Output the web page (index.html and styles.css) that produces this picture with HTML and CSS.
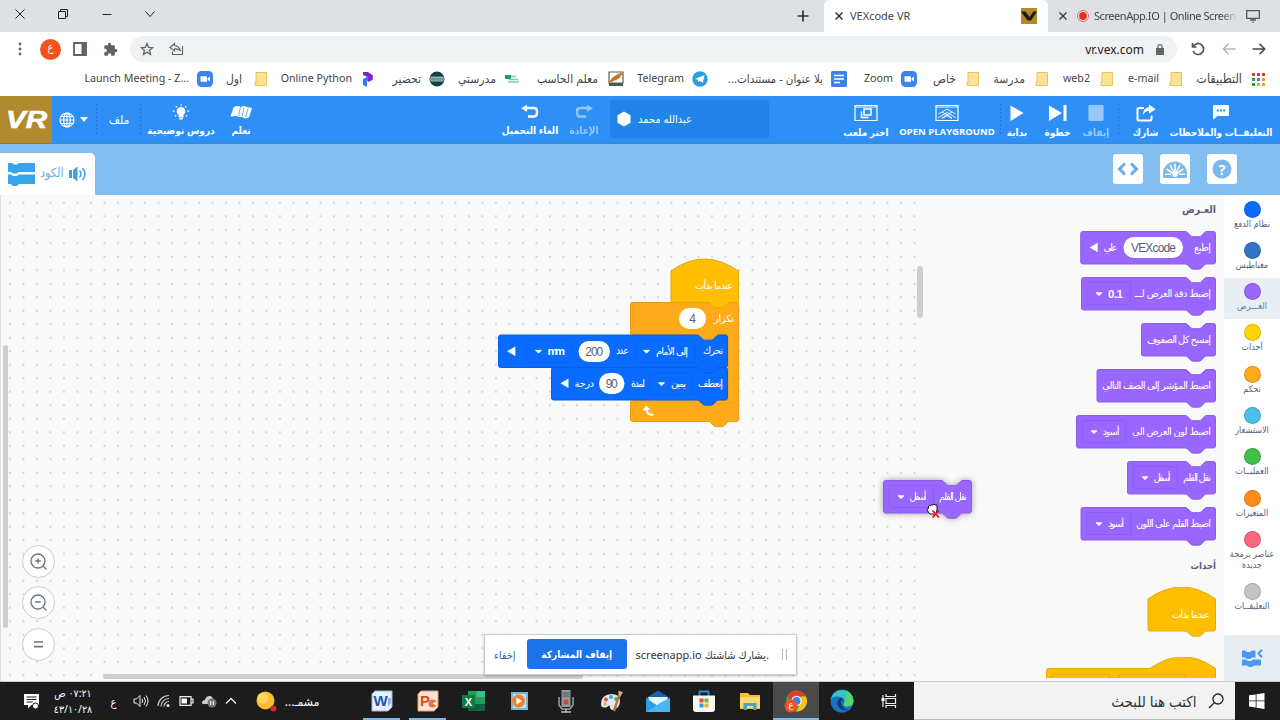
FILE: index.html
```html
<!DOCTYPE html>
<html lang="ar">
<head>
  <meta charset="UTF-8">
  <meta name="viewport" content="width=device-width, initial-scale=1.0">
  <title>VEXcode VR</title>
  <link rel="stylesheet" href="styles.css">
</head>
<body>

  <!-- shared shapes -->
  <svg class="defs" width="0" height="0">
    <defs>
      <symbol id="folder" viewBox="0 0 16 16"><path d="M4 1.500h10.500v13H4z" fill="#fde293" stroke="#e8c55c"/><path d="M4.500 10.500l-1.500.5v3.500h8" fill="#fde293" stroke="#e8c55c"/></symbol>
      <symbol id="zoomapp" viewBox="0 0 16 16"><rect width="16" height="16" rx="4.500" fill="#3f83f0"/><path d="M3.500 5.200h5.500q1 0 1 1v4.600H4.500q-1 0-1-1zM10.600 7.200l2.400-1.700v5l-2.400-1.700z" fill="#fff"/></symbol>
      <symbol id="chev" viewBox="0 0 7 4"><path d="M.5.3h6q.5.2.1.8L4.100 3.600q-.6.5-1.200 0L.4 1.100Q0 .5.500.3z" fill="#fff"/></symbol>
    </defs>
  </svg>

  <header class="tabs">
    <div class="win">
      <svg viewBox="0 0 12 12" width="12" height="12"><path d="M1.500 1.500l9 9M10.500 1.500l-9 9"/></svg>
      <svg viewBox="0 0 12 12" width="12" height="12"><path d="M1.500 3.500h7v7h-7zM3.500 3.500v-2h7v7h-2"/></svg>
      <svg viewBox="0 0 12 12" width="12" height="12"><path d="M1.500 6.500h9"/></svg>
      <svg viewBox="0 0 12 12" width="12" height="12"><path d="M1.500 3.500L6 8.500l4.500-5"/></svg>
    </div>
    <svg class="plus" viewBox="0 0 12 12" width="12" height="12"><path d="M6 .5v11M.5 6h11" stroke="#333" stroke-width="1.700"/></svg>
    <div class="tab active">
      <svg viewBox="0 0 8 8" width="8" height="8"><path d="M.5.500l7 7M7.500.500l-7 7" stroke="#333" stroke-width="1.500"/></svg>
      <span class="tab-title">VEXcode VR</span>
      <svg viewBox="0 0 16 16" width="16" height="16"><path d="M0 0h16v16H0z" fill="#b1892f"/><path d="M0 3.500h4.500L8.500 9l4-5.500H16L10 12.500H6.500z" fill="#1e1a12"/></svg>
    </div>
    <div class="tab other">
      <svg viewBox="0 0 8 8" width="8" height="8"><path d="M.5.500l7 7M7.500.500l-7 7" stroke="#444" stroke-width="1.500"/></svg>
      <svg viewBox="0 0 12 12" width="12" height="12"><circle cx="6" cy="6" r="5.400" fill="#fff" stroke="#d93025" stroke-width=".8"/><circle cx="6" cy="6" r="3.900" fill="#d93025"/></svg>
      <span class="tab-title fade">ScreenApp.IO | Online Screen</span>
      <svg viewBox="0 0 14 16" width="14" height="16"><path d="M.7 2.700h12.600v7.600H.7zM4 12h6M7 10v2" stroke="#555" fill="none" stroke-width="1.300"/><path d="M6.200 13.500h1.600v1.500H6.200z" fill="#d55"/></svg>
    </div>
  </header>

  <div class="toolbar">
    <svg class="t-more" viewBox="0 0 4 14" width="4" height="14"><circle cx="2" cy="2" r="1.400"/><circle cx="2" cy="7" r="1.400"/><circle cx="2" cy="12" r="1.400"/></svg>
    <span class="avatar">ع</span>
    <svg viewBox="0 0 14 14" width="14" height="14"><path d="M1 1h12v12H1z" fill="none" stroke="#5f6368" stroke-width="1.800"/><path d="M8.500 1H13v12H8.500z"/></svg>
    <svg class="t-ext" viewBox="0 0 24 24" width="15" height="15"><path d="M20.500 11H19V7a2 2 0 0 0-2-2h-4V3.500a2.500 2.500 0 0 0-5 0V5H4a2 2 0 0 0-2 2v3.800h1.500a2.700 2.700 0 0 1 0 5.400H2V20a2 2 0 0 0 2 2h3.800v-1.500a2.700 2.700 0 0 1 5.400 0V22H17a2 2 0 0 0 2-2v-4h1.500a2.500 2.500 0 0 0 0-5z"/></svg>
    <div class="omnibox">
      <svg viewBox="0 0 24 24" width="14" height="14"><path d="M12 2.800l2.800 6.300 6.900.6-5.200 4.600 1.500 6.800-6-3.600-6 3.600 1.500-6.800-5.200-4.600 6.900-.6z" fill="none" stroke="#5f6368" stroke-width="2.200"/></svg>
      <svg class="o-share" viewBox="0 0 15 14" width="15" height="14"><path d="M13.500 4v8.500h-10V9.500M5.500 1.500L1 5.500l4.500 3.500V7q4-.5 6 2-1-5-6-5.500z" fill="none" stroke="#5f6368" stroke-width="1.100"/></svg>
      <span class="url">vr.vex.com</span>
      <svg viewBox="0 0 8 11" width="8" height="11"><path d="M0 4h8v7H0z"/><path d="M2 4.500V2.700a2 2 0 0 1 4 0v1.800" fill="none" stroke="#5f6368" stroke-width="1.200"/></svg>
    </div>
    <svg class="t-reload" viewBox="0 0 14 14" width="14" height="14"><path d="M2.200 4.500A5.500 5.500 0 1 1 2 9M1.500 1v4h4" fill="none" stroke="#555" stroke-width="1.700"/></svg>
    <svg class="t-back" viewBox="0 0 14 12" width="14" height="12"><path d="M13.500 6H1.500M6.500.8L1.300 6l5.200 5.200" fill="none" stroke="#b4b6b8" stroke-width="1.500"/></svg>
    <svg class="t-fwd" viewBox="0 0 14 12" width="14" height="12"><path d="M.5 6h12M7.500.8L12.700 6l-5.200 5.200" fill="none" stroke="#444" stroke-width="1.600"/></svg>
  </div>

  <nav class="bookmarks">
    <a class="bm bm-launch">Launch Meeting - Z...<svg><use href="#zoomapp"/></svg></a>
    <a class="bm ar bm-first">اول<svg><use href="#folder"/></svg></a>
    <a class="bm bm-python">Online Python<svg viewBox="0 0 16 16"><path d="M3 1h5l5 3.500-.5 4.500-4.500 2-1-3 1.500-1.500L3 4z" fill="#7a22d8"/><path d="M3 8l5-2.500V9l-1 1v6l-4-2z" fill="#2e7af5"/></svg></a>
    <a class="bm ar bm-prep">تحضير<svg viewBox="0 0 16 16"><circle cx="8" cy="8" r="7.500" fill="#12434a"/><path d="M1.500 6.200h13M1 8h14M1.500 9.900h13" stroke="#d5e5e5" stroke-width="1"/></svg></a>
    <a class="bm ar bm-school">مدرستي<svg viewBox="0 0 16 16"><path d="M1 4h6v4H1z" fill="#1a9c78"/><path d="M7 5.500h5M5 8.500h9M4 11h11" stroke="#79cbb6" stroke-width="1.300"/></svg></a>
    <a class="bm ar bm-cs">معلم الحاسب<svg viewBox="0 0 16 16"><path d="M1 1h14v11H1z" fill="#fff" stroke="#56604f" stroke-width="1.200"/><path d="M1 12Q3 5 15 1q-2 6-7 8z" fill="#c8742a"/><path d="M1 12h14v3H1z" fill="#4b5a50"/></svg></a>
    <a class="bm bm-tele">Telegram<svg viewBox="0 0 16 16"><circle cx="8" cy="8" r="7.700" fill="#2ba0dc"/><path d="M3 8l9.500-4-1.700 8-3-2.200-1.500 1.500-.3-2.500z" fill="#fff"/></svg></a>
    <a class="bm ar bm-docs" dir="rtl"><svg viewBox="0 0 16 16"><rect width="16" height="16" rx="1.500" fill="#4080ee"/><path d="M3 4.500h10M3 8h10M3 11.500h6" stroke="#fff" stroke-width="1.700"/></svg>بلا عنوان - مستندات...</a>
    <a class="bm bm-zoom">Zoom<svg><use href="#zoomapp"/></svg></a>
    <a class="bm ar bm-priv">خاص<svg><use href="#folder"/></svg></a>
    <a class="bm ar bm-mad">مدرسة<svg><use href="#folder"/></svg></a>
    <a class="bm bm-web">web2<svg><use href="#folder"/></svg></a>
    <a class="bm bm-mail">e-mail<svg><use href="#folder"/></svg></a>
    <a class="bm ar bm-apps">التطبيقات<svg viewBox="0 0 16 16"><path d="M2 2h3v3H2zM7 2h3v3H7zM12 2h3v3h-3z" fill="#d23f31"/><path d="M2 7h3v3H2z" fill="#2d9b50"/><path d="M7 7h3v3H7z" fill="#3f7fe8"/><path d="M12 7h3v3h-3zM7 12h3v3H7zM12 12h3v3h-3z" fill="#e3a92b"/><path d="M2 12h3v3H2z" fill="#2d9b50"/></svg></a>
  </nav>

  <div class="appbar">
    <div class="logo"><svg viewBox="0 0 52 47" width="52" height="47"><text x="6" y="32" textLength="41" lengthAdjust="spacingAndGlyphs" class="logo-text">VR</text></svg></div>
    <div class="ab lang">
      <svg viewBox="0 0 16 16" width="16" height="16"><g fill="none" stroke="#fff" stroke-width="1.200"><circle cx="8" cy="8" r="7"/><ellipse cx="8" cy="8" rx="3.300" ry="7"/><path d="M8 1v14M1 8h14M2 4.500h12M2 11.500h12"/></g></svg>
      <svg viewBox="0 0 8 5" width="8" height="5"><path d="M0 0h8L4 5z" fill="#fff"/></svg>
    </div>
    <div class="ab file">ملف</div>
    <div class="ab lessons">
      <svg viewBox="0 0 18 16" width="18" height="16"><path d="M9 3a4.300 4.300 0 0 0-2.500 7.800V13.500h5v-2.700A4.300 4.300 0 0 0 9 3zM7.200 14h3.600v1.500H7.200z" fill="#fff"/><path d="M9 .2v1.300M3.800 2.200l1 1M14.200 2.200l-1 1M.8 7.200h1.700M15.500 7.200h1.700M3 12.200l1.200-.9M15 12.200l-1.200-.9" stroke="#fff" stroke-width="1.300"/></svg>
      <span>دروس توضيحية</span>
    </div>
    <div class="ab learn">
      <svg viewBox="0 0 22 16" width="22" height="16"><path d="M3.500 3.500q4-2.500 7-.5l2-.8q2.500-.7 4 .8l5.500 1-3 9.500-3.500 1-4-1.500-3 0-1.500-1-6.500.5z" fill="#fff"/><path d="M10.500 3L8.500 12M14 4l-2 8.500M18 4.500l-2.500 8.500" stroke="#2e90f7" stroke-width=".7"/></svg>
      <span>تعلم</span>
    </div>
    <div class="ab undo">
      <svg viewBox="0 0 18 16" width="18" height="16"><path d="M5 4h7.500q3.500 0 3.500 3v2q0 3.500-3.500 3.500H7" fill="none" stroke="#fff" stroke-width="2.400"/><path d="M0 4.200L6 .7v7z" fill="#fff"/></svg>
      <span>الغاء التحميل</span>
    </div>
    <div class="ab redo">
      <svg viewBox="0 0 18 16" width="18" height="16"><path d="M13 4H5.500Q2 4 2 7v2q0 3.500 3.500 3.500H11" fill="none" stroke="#fff" stroke-width="2.400"/><path d="M18 4.200L12 .7v7z" fill="#fff"/></svg>
      <span>الإعادة</span>
    </div>
    <div class="project">
      <svg viewBox="0 0 14 16" width="14" height="16"><path d="M7 .5l6.500 3.700v7.600L7 15.500.5 11.800V4.200z" fill="#fff"/></svg>
      <span>عبدالله محمد</span>
    </div>
    <div class="ab pick">
      <svg viewBox="0 0 24 18" width="24" height="18"><path d="M1 1.500h22v15H1z" fill="none" stroke="#fff" stroke-width="1.200"/><path d="M1 3h22" stroke="#fff"/><path d="M10 5h7v6h-7zM7.500 7.500v6h7" fill="none" stroke="#fff" stroke-width="1.500"/></svg>
      <span>اختر ملعب</span>
    </div>
    <div class="ab playground">
      <svg viewBox="0 0 24 18" width="24" height="18"><path d="M1 1.500h22v15H1z" fill="none" stroke="#fff" stroke-width="1.200"/><path d="M1 3h22M3.500 10L12 5l8.500 5M3.500 13.500L12 8.500l8.500 5M7 14.500l5-3 5 3M7 8l10 6M17 8L7 14" stroke="#fff" fill="none" stroke-width=".9"/></svg>
      <span>OPEN PLAYGROUND</span>
    </div>
    <div class="ab start">
      <svg viewBox="0 0 14 18" width="14" height="18"><path d="M.5 1.500L13.500 9l-13 8z" fill="#fff"/></svg>
      <span>بداية</span>
    </div>
    <div class="ab step">
      <svg viewBox="0 0 18 18" width="18" height="18"><path d="M0 1.500L13 9 0 17zM14.500 1h3v16h-3z" fill="#fff"/></svg>
      <span>خطوة</span>
    </div>
    <div class="ab stop">
      <svg viewBox="0 0 16 18" width="16" height="18"><rect x=".5" y="1" width="15" height="16" rx="1" fill="#fff"/></svg>
      <span>إيقاف</span>
    </div>
    <div class="ab share">
      <svg viewBox="0 0 20 18" width="20" height="18"><path d="M8 4H3q-1.500 0-1.500 1.500v9.500q0 1.500 1.500 1.500h11q1.500 0 1.500-1.500v-3.500" fill="none" stroke="#fff" stroke-width="2"/><path d="M13 .5l6.500 4.700L13 9.800V7q-4 0-6 4 0-7 6-8z" fill="#fff"/></svg>
      <span>شارك</span>
    </div>
    <div class="ab feedback">
      <svg viewBox="0 0 16 18" width="16" height="18"><path d="M1 1h14q1 0 1 1v9q0 1-1 1H4.500L0 15.800V2q0-1 1-1z" fill="#fff"/><path d="M3.800 5.500h2v2h-2zM7 5.500h2v2H7zM10.200 5.500h2v2h-2z" fill="#2e90f7"/></svg>
      <span>التعليقــات والملاحظات</span>
    </div>
  </div>

  <div class="subbar">
    <div class="codetab">
      <svg viewBox="0 0 27 24" width="27" height="24"><path d="M0 1h4l2 1.500h3L11 1h16v9H11l-2 1.500H5L3 10H0zM0 12.500h3l2 1.500h4l2-1.500h16V22H11l-2 2H5l-2-2H0z" fill="#36a5ee"/></svg>
      <span>الكود</span>
      <svg viewBox="0 0 18 16" width="18" height="16"><path d="M0 4h3v8H0zM4 4l4.500-3.500v15L4 12z" fill="#3c9fe6"/><path d="M10.500 4.500q3 3.500 0 7M13.500 2q5 6 0 12" fill="none" stroke="#3c9fe6" stroke-width="1.500"/></svg>
    </div>
    <div class="tools">
      <span class="tool"><svg viewBox="0 0 22 14" width="22" height="14"><path d="M8 1.500L2.500 7 8 12.500M14 1.500L19.500 7 14 12.500" fill="none" stroke="#68aeea" stroke-width="3"/></svg></span>
      <span class="tool"><svg viewBox="0 0 24 17" width="24" height="17"><path d="M0 17v-4.500a12 12 0 0 1 24 0V17z" fill="#7ab8ee"/><path d="M12 13.500V2.500M12 13.500L7 4M12 13.500L17 4M12 13.500L3.500 8M12 13.500L20.500 8M2 13.300h6M16 13.300h6" stroke="#fff" stroke-width="1.500"/><circle cx="12" cy="13.500" r="2.500" fill="#fff"/></svg></span>
      <span class="tool"><svg viewBox="0 0 20 20" width="20" height="20"><circle cx="10" cy="10" r="9.500" fill="#7ab8ee"/><text x="10" y="15.500" class="qmark">?</text></svg></span>
    </div>
  </div>

  <main class="work">
    <section class="canvas">
      <svg class="script" viewBox="498 258 242 170" width="242" height="170">
        <path d="M630.500 304.500q0-2 2-2H708c1.500 0 2.300.7 3 1.500l2.400 2.400c.8.800 1.600 1.300 3 1.300h5.200c1.400 0 2.200-.5 3-1.300L727 304c.7-.8 1.500-1.500 3-1.500h6.700q2 0 2 2V419.500q0 2-2 2H730c-1.500 0-2.300.7-3 1.500l-2.400 2.400c-.8.800-1.600 1.300-3 1.300h-5.200c-1.400 0-2.200-.5-3-1.300L711 423c-.7-.8-1.500-1.500-3-1.500h-75.500q-2 0-2-2V402q0-2 2-2H728V335H719c-1.500 0-2.300.7-3 1.500l-2.400 2.400c-.8.800-1.600 1.300-3 1.300h-5.200c-1.400 0-2.200-.5-3-1.300L700 336.500c-.7-.8-1.500-1.500-3-1.500h-64.500q-2 0-2-2z" fill="#ffab19" stroke="#e89b18"/>
        <path d="M671 302.500V271q33-24 67.500 0V302.500H730c-1.500 0-2.300.7-3 1.500l-2.400 2.400c-.8.800-1.600 1.300-3 1.300h-5.200c-1.400 0-2.200-.5-3-1.300L711 304c-.7-.8-1.500-1.500-3-1.500z" fill="#ffbf00" stroke="#e0aa0c"/>
        <path d="M551.500 369.500q0-2 2-2H725.500q2 0 2 2V398q0 2-2 2H719c-1.500 0-2.300.7-3 1.500l-2.400 2.400c-.8.800-1.600 1.300-3 1.300h-5.200c-1.400 0-2.200-.5-3-1.300L700 401.500c-.7-.8-1.500-1.500-3-1.500H553.500q-2 0-2-2z" fill="#0a6bff" stroke="#0560e6"/>
        <path d="M498.500 337q0-2 2-2H697c1.500 0 2.300.7 3 1.500l2.400 2.400c.8.800 1.600 1.300 3 1.300h5.200c1.400 0 2.200-.5 3-1.300L716 336.500c.7-.8 1.500-1.500 3-1.500h6.500q2 0 2 2V365.500q0 2-2 2H719c-1.500 0-2.300.7-3 1.500l-2.400 2.400c-.8.800-1.600 1.300-3 1.300h-5.200c-1.400 0-2.200-.5-3-1.300L700 369c-.7-.8-1.500-1.500-3-1.500H500.500q-2 0-2-2z" fill="#0a6bff" stroke="#0560e6"/>
        <text x="733" y="289" textLength="38">عندما بدأت</text>
        <text x="734" y="321.500" textLength="20">تكرار</text>
        <rect class="num" x="679" y="308" width="27" height="21" rx="10.500"/>
        <text class="val" x="692.500" y="322.500">4</text>
        <text x="723" y="354" textLength="20">تحرك</text>
        <rect class="drop blue" x="636" y="340.500" width="59" height="22" rx="2"/>
        <text x="688" y="354.500" textLength="32">إلى الأمام</text>
        <use href="#chev" x="643" y="349.500" width="7" height="4"/>
        <text x="629" y="354" textLength="13">عدد</text>
        <rect class="num" x="578.500" y="341" width="31.500" height="21" rx="10.500"/>
        <text class="val" x="594.300" y="355.500" textLength="18">200</text>
        <rect class="drop blue" x="526" y="340.500" width="46" height="22" rx="2"/>
        <text class="unit" x="565" y="355" textLength="17.500">mm</text>
        <use href="#chev" x="535" y="349.500" width="7" height="4"/>
        <path d="M507 351.200l8.300-4.700v9.400z" fill="#fff"/>
        <text x="723" y="387" textLength="25">إنعطف</text>
        <rect class="drop blue" x="650" y="373" width="42" height="22" rx="2"/>
        <text x="686" y="387" textLength="15">يمين</text>
        <use href="#chev" x="658" y="382" width="7" height="4"/>
        <text x="645" y="387" textLength="14">لمدة</text>
        <rect class="num" x="599" y="373" width="25.500" height="21" rx="10.500"/>
        <text class="val" x="611.800" y="387.500" textLength="12">90</text>
        <text x="594" y="387" textLength="19.500">درجة</text>
        <path d="M560.500 383.200l8-4.700v9.400z" fill="#fff"/>
        <path d="M653.500 414.500q-7 1-7-5.500" fill="none" stroke="#fff" stroke-width="2"/><path d="M642.500 410.500l3.800-5 4 4z" fill="#fff"/>
      </svg>
      <div class="zooms">
        <span class="zbtn"><svg viewBox="0 0 17 17" width="17" height="17"><circle cx="8" cy="8" r="7"/><path d="M13 13l3.500 3.500M8 5.200v5.600M5.200 8h5.600"/></svg></span>
        <span class="zbtn"><svg viewBox="0 0 17 17" width="17" height="17"><circle cx="8" cy="8" r="7"/><path d="M13 13l3.500 3.500M5.200 8h5.600"/></svg></span>
        <span class="zbtn"><svg viewBox="0 0 17 17" width="17" height="17"><path d="M4 6h9M4 10.700h9" stroke-width="1.700"/></svg></span>
      </div>
      <i class="scroll-v"></i>
      <i class="scroll-h"></i>
    </section>

    <section class="flyout">
      <i class="scroll-f"></i>
      <h2>العـرض</h2>
      <svg class="block" viewBox="-136 0 136 39" width="136" height="39">
        <path d="M-133.300.500H-31c1.500 0 2.300.7 3 1.500l2.400 2.400c.8.800 1.600 1.300 3 1.300h5.200c1.400 0 2.200-.5 3-1.300L-12 2c.7-.8 1.500-1.500 3-1.500h6.500q2 0 2 2V31q0 2-2 2H-9c-1.500 0-2.300.7-3 1.500l-2.400 2.400c-.8.800-1.600 1.300-3 1.300h-5.200c-1.400 0-2.200-.5-3-1.300L-28 34.500c-.7-.8-1.500-1.500-3-1.500h-102.300q-2 0-2-2V2.500q0-2 2-2z"/>
        <text x="-5" y="20" textLength="17">إطبع</text>
        <rect class="num" x="-92.500" y="6" width="59.500" height="21" rx="10.500"/>
        <text class="val" x="-62.500" y="20.800" textLength="45">VEXcode</text>
        <text x="-98.500" y="20" textLength="14">علي</text>
        <path class="tri" d="M-126.300 16.500l8-4.700v9.400z"/>
      </svg>
      <svg class="block" viewBox="-136 0 136 39" width="136" height="39">
        <path d="M-132.500.500H-31c1.500 0 2.300.7 3 1.500l2.400 2.400c.8.800 1.600 1.300 3 1.300h5.200c1.400 0 2.200-.5 3-1.300L-12 2c.7-.8 1.500-1.500 3-1.500h6.500q2 0 2 2V31q0 2-2 2H-9c-1.500 0-2.300.7-3 1.500l-2.400 2.400c-.8.800-1.600 1.300-3 1.300h-5.200c-1.400 0-2.200-.5-3-1.300L-28 34.500c-.7-.8-1.500-1.500-3-1.500h-101.500q-2 0-2-2V2.500q0-2 2-2z"/>
        <text x="-5" y="20" textLength="76">إضبط دقة العرض لـــ</text>
        <rect class="drop" x="-129" y="5.500" width="43.500" height="22" rx="2"/>
        <text class="unit" x="-93" y="20.500" textLength="15">0.1</text>
        <use href="#chev" x="-120.500" y="15" width="7" height="4"/>
      </svg>
      <svg class="block" viewBox="-136 0 136 39" width="136" height="39">
        <path d="M-72.500.500H-31c1.500 0 2.300.7 3 1.500l2.400 2.400c.8.800 1.600 1.300 3 1.300h5.200c1.400 0 2.200-.5 3-1.300L-12 2c.7-.8 1.500-1.500 3-1.500h6.500q2 0 2 2V31q0 2-2 2H-9c-1.500 0-2.300.7-3 1.500l-2.400 2.400c-.8.800-1.600 1.300-3 1.300h-5.200c-1.400 0-2.200-.5-3-1.300L-28 34.500c-.7-.8-1.500-1.500-3-1.500h-41.500q-2 0-2-2V2.500q0-2 2-2z"/>
        <text x="-5" y="20" textLength="64">إمسح كل الصفوف</text>
      </svg>
      <svg class="block" viewBox="-136 0 136 39" width="136" height="39">
        <path d="M-117 .5H-31c1.500 0 2.300.7 3 1.500l2.400 2.400c.8.800 1.600 1.300 3 1.300h5.200c1.400 0 2.200-.5 3-1.300L-12 2c.7-.8 1.500-1.500 3-1.500h6.500q2 0 2 2V31q0 2-2 2H-9c-1.500 0-2.300.7-3 1.500l-2.400 2.400c-.8.800-1.600 1.300-3 1.300h-5.200c-1.400 0-2.200-.5-3-1.300L-28 34.500c-.7-.8-1.500-1.500-3-1.500h-86q-2 0-2-2V2.500q0-2 2-2z"/>
        <text x="-5" y="20" textLength="109">اضبط المؤشر إلى الصف التالي</text>
      </svg>
      <svg class="block" viewBox="-141 0 141 39" width="141" height="39">
        <path d="M-137.500.500H-31c1.500 0 2.300.7 3 1.500l2.400 2.400c.8.800 1.600 1.300 3 1.300h5.200c1.400 0 2.200-.5 3-1.300L-12 2c.7-.8 1.500-1.500 3-1.500h6.500q2 0 2 2V31q0 2-2 2H-9c-1.500 0-2.300.7-3 1.500l-2.400 2.400c-.8.800-1.600 1.300-3 1.300h-5.200c-1.400 0-2.200-.5-3-1.300L-28 34.500c-.7-.8-1.500-1.500-3-1.500h-106.500q-2 0-2-2V2.500q0-2 2-2z"/>
        <text x="-5" y="20" textLength="79">اضبط لون العرض الي</text>
        <rect class="drop" x="-134" y="5.500" width="44" height="22" rx="2"/>
        <text x="-96.500" y="20" textLength="17">أسود</text>
        <use href="#chev" x="-125.500" y="15" width="7" height="4"/>
      </svg>
      <svg class="block" viewBox="-136 0 136 39" width="136" height="39">
        <path id="penshape" d="M-86.500.500H-31c1.500 0 2.300.7 3 1.500l2.400 2.400c.8.800 1.600 1.300 3 1.300h5.200c1.400 0 2.200-.5 3-1.300L-12 2c.7-.8 1.500-1.500 3-1.500h6.500q2 0 2 2V31q0 2-2 2H-9c-1.500 0-2.300.7-3 1.500l-2.400 2.400c-.8.800-1.600 1.300-3 1.300h-5.200c-1.400 0-2.200-.5-3-1.300L-28 34.500c-.7-.8-1.500-1.500-3-1.500h-55.500q-2 0-2-2V2.500q0-2 2-2z"/>
        <text x="-5" y="20" textLength="28">نقل القلم</text>
        <rect class="drop" x="-82.500" y="5.500" width="44" height="22" rx="2"/>
        <text x="-45.500" y="20" textLength="17">أسفل</text>
        <use href="#chev" x="-74.500" y="15" width="7" height="4"/>
      </svg>
      <svg class="block" viewBox="-136 0 136 39" width="136" height="39">
        <path d="M-133 .5H-31c1.500 0 2.300.7 3 1.500l2.400 2.400c.8.800 1.600 1.300 3 1.300h5.200c1.400 0 2.200-.5 3-1.300L-12 2c.7-.8 1.500-1.500 3-1.500h6.500q2 0 2 2V31q0 2-2 2H-9c-1.500 0-2.300.7-3 1.500l-2.400 2.400c-.8.800-1.600 1.300-3 1.300h-5.200c-1.400 0-2.200-.5-3-1.300L-28 34.500c-.7-.8-1.500-1.500-3-1.500h-102q-2 0-2-2V2.500q0-2 2-2z"/>
        <text x="-5" y="20" textLength="75">اضبط القلم على اللون</text>
        <rect class="drop" x="-129" y="5.500" width="44" height="22" rx="2"/>
        <text x="-92" y="20" textLength="16">أسود</text>
        <use href="#chev" x="-120.500" y="15" width="7" height="4"/>
      </svg>
      <h2 class="events">أحداث</h2>
      <svg class="block hat" viewBox="-69 0 69 50" width="69" height="50">
        <path d="M-68 12Q-34-12-.5 12V42q0 2-2 2H-9c-1.500 0-2.300.7-3 1.500l-2.400 2.400c-.8.800-1.600 1.300-3 1.300h-5.200c-1.400 0-2.200-.5-3-1.300L-28 45.500c-.7-.8-1.500-1.500-3-1.500h-35q-2 0-2-2z"/>
        <text x="-6" y="30.500" textLength="38">عندما بدأت</text>
      </svg>
      <svg class="block hat cut" viewBox="-171 0 171 21" width="171" height="21">
        <path d="M-169.500 22V13.500q0-2 2-2H-66Q-33-12-.5 11.500V22z"/>
        <path d="M-164 22v-2.500q0-2.500 2.500-2.500h53q2.500 0 2.500 2.500V22M-97 22v-2.500q0-2.500 2.500-2.500h62q2.500 0 2.500 2.500V22"/>
      </svg>
    </section>

    <aside class="cats">
      <div class="cat motion"><i></i><span>نظام الدفع</span></div>
      <div class="cat magnet"><i></i><span>مغناطيس</span></div>
      <div class="cat looks"><i></i><span>العـــرض</span></div>
      <div class="cat event"><i></i><span>أحداث</span></div>
      <div class="cat control"><i></i><span>تحكم</span></div>
      <div class="cat sensing"><i></i><span>الاستشعار</span></div>
      <div class="cat ops"><i></i><span>العمليــات</span></div>
      <div class="cat vars"><i></i><span>المتغيرات</span></div>
      <div class="cat myblocks"><i></i><span>عناصر برمجة جديدة</span></div>
      <div class="cat notes"><i></i><span>التعليقــات</span></div>
      <div class="cat-toggle"><svg viewBox="0 0 21 18" width="21" height="18"><path d="M0 1.500h3l2 1.500h3l2-1.500h3.500v7H10l-2 1.500H5L3 8.500H0zM0 10.500h4l2 1.500h3l2-1.500h8v6h-7L10 18H7l-2-1.500H0z" fill="#4c97f0"/><path d="M20 .7L16.500 4.500 20 8.300" fill="none" stroke="#4c97f0" stroke-width="2"/></svg></div>
    </aside>

    <svg class="block dragged" viewBox="-89 0 89 39" width="89" height="39">
      <use href="#penshape"/>
      <text x="-5" y="20" textLength="28">نقل القلم</text>
      <rect class="drop" x="-82.500" y="5.500" width="44" height="22" rx="2"/>
      <text x="-45.500" y="20" textLength="17">أسفل</text>
      <use href="#chev" x="-74.500" y="15" width="7" height="4"/>
    </svg>
    <svg class="cursor" viewBox="0 0 16 16" width="16" height="16"><path d="M3 10L1 6.500q0-1.500 1.500-1V3q1-1.500 2 0 .5-2.500 2.200-.8Q8-.2 9 2q2-1 2 1v4l-1 4H4z" fill="#fff" stroke="#111"/><path d="M6.500 7.500l6.500 7M13 7.500l-6.500 7" stroke="#d8182a" stroke-width="1.800"/></svg>

    <div class="sharing">
      <a class="hide">إخفاء</a>
      <button class="stop-share" type="button">إيقاف المشاركة</button>
      <span class="share-msg">screenapp.io يشارك شاشتك.</span>
      <i class="grip"></i>
    </div>
  </main>

  <footer class="taskbar">
    <div class="tk note"><svg viewBox="0 0 17 17" width="17" height="17"><path d="M1 1h15v11H8.500L5 15.500V12H1z" fill="#fff"/><path d="M3.500 4h10M3.500 6.500h10M3.500 9h6" stroke="#1b1b1b"/><circle cx="12.500" cy="13" r="3" fill="#fff" stroke="#1b1b1b"/></svg></div>
    <div class="clock" dir="rtl"><span>٠٧:٢١ ص</span><span>٤٣/١٠/٢٨</span></div>
    <div class="tk kb">ع</div>
    <div class="tk tray"><svg viewBox="0 0 16 14" width="16" height="14"><path d="M1 5h2.500L7 1.500v11L3.500 9H1zM9 5q1.500 2 0 4M11 3q3 4 0 8M13 1.500q4 5.500 0 11" fill="none" stroke="#eee"/></svg></div>
    <div class="tk tray"><svg viewBox="0 0 14 14" width="14" height="14"><path d="M1 12A11 11 0 0 1 12 1.500M4 12.500A8 8 0 0 1 12 4.500M7 12.500a5 5 0 0 1 5-5" fill="none" stroke="#ccc" stroke-width="1.200"/><circle cx="11" cy="11.500" r="1.500" fill="#fff"/></svg></div>
    <div class="tk tray"><svg viewBox="0 0 15 10" width="15" height="10"><path d="M1 .7h11v8.600H1zM12.500 3h1.500v4h-1.500" fill="none" stroke="#eee" stroke-width="1.200"/><path d="M2.500 2.500H8v5H2.500z" fill="#fff"/></svg></div>
    <div class="tk tray"><svg viewBox="0 0 16 13" width="16" height="13"><path d="M1 8q0-3 3-3 1-4 4.500-4T12 5v4H3Q1 9.500 1 8z" fill="#ccc"/><circle cx="11" cy="8" r="4.500" fill="#777"/><path d="M9.700 6v4M12.300 6v4" stroke="#fff"/></svg></div>
    <div class="tk tray"><svg viewBox="0 0 12 8" width="12" height="8"><path d="M1 6.500L6 1.500l5 5" fill="none" stroke="#eee" stroke-width="1.300"/></svg></div>
    <div class="tk weather"><svg viewBox="0 0 21 21" width="21" height="21"><circle cx="9.500" cy="9.500" r="9" fill="#fdbb30"/><circle cx="7" cy="7" r="5.500" fill="#ffd35c"/><circle cx="17.500" cy="17.500" r="3" fill="#d5253c"/></svg><span dir="rtl">مشمـ...</span></div>
    <div class="tk app open"><svg viewBox="0 0 22 22" width="22" height="22"><path d="M4 1h17v16l-4 4H1V4z" fill="#e9f0fa" stroke="#9bb8e0"/><path d="M17 8h3v5l-3 4z" fill="#8fb3e2"/><text x="9.500" y="16" class="office word">W</text></svg></div>
    <div class="tk app open"><svg viewBox="0 0 22 22" width="22" height="22"><path d="M4 1h17v16l-4 4H1V4z" fill="#fbe3d6" stroke="#e99a6b"/><circle cx="15.500" cy="13.500" r="4" fill="#e6743d"/><path d="M15.500 13.500l4-2v4z" fill="#fff"/><text x="8" y="16" class="office ppt">P</text></svg></div>
    <div class="tk app"><svg viewBox="0 0 24 22" width="24" height="22"><path d="M6 1h17v20H6z" fill="#1f9e5c"/><path d="M14.500 1H23v6h-8.500z" fill="#35c281"/><path d="M6 14h17v7H6z" fill="#15603a"/><path d="M0 5h13v13H0z" fill="#107c41"/><text x="6.500" y="15.500" class="office excel">X</text></svg></div>
    <div class="tk app"><svg viewBox="0 0 20 20" width="20" height="20"><path d="M1 1h17v18H1z" fill="#7cb4d4"/><path d="M3 3h13v14H3z" fill="#c5dce8"/><circle cx="8.500" cy="10" r="6.500" fill="#ea8434"/><path d="M6.500 6.500L12 10l-5.500 3.500z" fill="#fff"/></svg></div>
    <div class="tk app"><svg viewBox="0 0 16 23" width="16" height="23"><path d="M3.500 0h9v17h-9z" fill="#92989b"/><path d="M1 7v8l3 4h8l3-4V7" fill="none" stroke="#9ba0a3" stroke-width="1.500"/><path d="M3 22h10M8 19v3" stroke="#bbb" stroke-width="1.500"/><circle cx="8" cy="12" r="2.500" fill="#c84a2b"/><path d="M4.500 2h7v5h-7z" fill="#6f7679"/></svg></div>
    <div class="tk app"><svg viewBox="0 0 24 23" width="24" height="23"><path d="M1 14Q1 5 11 4q9 0 9 7t-7 9q-3 0-3-3t-3 0q-6 2-6-3z" fill="#dfe9f2"/><circle cx="6" cy="9.500" r="1.900" fill="#e44"/><circle cx="11" cy="7" r="1.900" fill="#3a9be8"/><circle cx="16" cy="9" r="1.900" fill="#48b04b"/><circle cx="5" cy="14" r="1.700" fill="#e6b32c"/><path d="M20 3l-6 18" stroke="#b87a3c" stroke-width="2.500"/><path d="M18 1l5 1-3 5z" fill="#dfb182"/></svg></div>
    <div class="tk app"><svg viewBox="0 0 24 22" width="24" height="22"><path d="M0 8L12 .5 24 8v3H0z" fill="#1763b0"/><path d="M2.500 7h19v8h-19z" fill="#e9f5fd"/><path d="M0 8l12 8 12-8v14H0z" fill="#2a9ee8"/><path d="M0 22L14 13l10-5v14z" fill="#46b8f3"/></svg></div>
    <div class="tk app"><svg viewBox="0 0 22 22" width="22" height="22"><path d="M6.500 6V1.500h9V6" fill="none" stroke="#2a93d6" stroke-width="1.800"/><path d="M0 5.500h22V19q0 3-3 3H3q-3 0-3-3z" fill="#f5f5f5"/><path d="M6.500 8.500h4v4h-4z" fill="#e8502a"/><path d="M11.500 8.500h4v4h-4z" fill="#7ab92c"/><path d="M6.500 13.500h4v4h-4z" fill="#28a1e8"/><path d="M11.500 13.500h4v4h-4z" fill="#f3b51e"/></svg></div>
    <div class="tk app"><svg viewBox="0 0 20 18" width="20" height="18"><path d="M0 1h8l2 2h10v14H0z" fill="#f4bd3c"/><path d="M0 5h20v11H0z" fill="#fcd86d"/><path d="M3.500 18v-7h13v7h-3.500v-4H7v4z" fill="#4b9fd6"/></svg></div>
    <div class="tk app open current"><svg viewBox="0 0 24 24" width="24" height="24"><circle cx="12.500" cy="12" r="10.500" fill="#34a853"/><path d="M3.400 6.700A10.500 10.500 0 0 1 22 7.500H12.500z" fill="#e33b2e"/><path d="M3.400 6.700L8 14.500l4.500-7z" fill="#e33b2e"/><path d="M22 7.500a10.500 10.500 0 0 1-9.800 15L17 14l-.5-6.500z" fill="#fbc116"/><circle cx="12.500" cy="12" r="5.200" fill="#fff"/><circle cx="12.500" cy="12" r="4" fill="#3c80ee"/><circle cx="7" cy="17" r="6.500" fill="#f4511e"/><text x="7" y="19" class="badge">ع</text></svg></div>
    <div class="tk app"><svg viewBox="0 0 24 24" width="24" height="24"><circle cx="12" cy="12" r="11.500" fill="#1374c9"/><path d="M.8 10A11.500 11.500 0 0 1 23.500 12q0 5-6 5.500-4 0-4-2.500 3-5-2.500-7Q5 6.500.8 10z" fill="#36c3c4"/><path d="M16 1.500A11.500 11.500 0 0 1 23.500 12q0 5-6 5.500-4 0-4-2.500 4-6 2.500-13.500z" fill="#55d36e"/><path d="M10 9q-4 3-2 8 3 5.500 11 4-5-1-6.500-4Q9 13 13 10.500 12 8.500 10 9z" fill="#123c70"/></svg></div>
    <div class="tk tv"><svg viewBox="0 0 16 16" width="16" height="16"><path d="M5 1v2.500h9.500V1M5 15v-2.500h9.500V15M5 5.500h9.500v5H5zM2 2v12" fill="none" stroke="#eee" stroke-width="1.200"/><path d="M.5 5h3v3h-3z" fill="#fff"/></svg></div>
    <div class="search">
      <span>اكتب هنا للبحث</span>
      <svg viewBox="0 0 16 16" width="16" height="16"><circle cx="10" cy="6" r="5" fill="none" stroke="#222" stroke-width="1.300"/><path d="M6.500 9.500L1 15" stroke="#222" stroke-width="1.300"/></svg>
    </div>
    <div class="tk win10"><svg viewBox="0 0 16 16" width="16" height="16"><path d="M0 2.300L6.700 1.400V7.500H0zM7.500 1.200L15.500 0v7.500h-8zM0 8.300h6.700v6.200L0 13.500zM7.500 8.300h8V16l-8-1.300z" fill="#fff"/></svg></div>
  </footer>

</body>
</html>
```
FILE: styles.css
```css
* {
  box-sizing: border-box;
}

body {
  margin: 0;
  width: 1280px;
  height: 720px;
  overflow: hidden;
  display: flex;
  flex-direction: column;
  background-color: #fff;
  font-family: "Noto Sans", "DejaVu Sans Condensed", "DejaVu Sans", sans-serif;
  font-size: 11px;
  color: #444;
}

svg {
  display: block;
  flex: none;
}

.defs {
  position: absolute;
}

/* browser tabs */
.tabs {
  height: 32px;
  flex: none;
  display: flex;
  align-items: center;
  background-color: #dde1e4;
}

.win {
  width: 782px;
  display: flex;
  gap: 31.300px;
  padding-left: 14px;
  padding-bottom: 5px;
}

.win path {
  fill: none;
  stroke: #222;
}

.plus {
  margin-left: 15px;
}

.tab {
  height: 32px;
  display: flex;
  align-items: center;
}

.active {
  width: 224px;
  margin-left: 15px;
  padding: 0 11px;
  background-color: #fff;
  border-radius: 6px 6px 0 0;
}

.active .tab-title {
  flex: 1;
  margin-left: 7px;
}

.tab-title {
  position: relative;
  top: -1px;
}

.other {
  width: 222px;
  padding-left: 11px;
}

.other svg + svg {
  margin-left: 10px;
}

.fade {
  width: 144px;
  margin: 0 8px 0 5px;
  letter-spacing: -.45px;
  white-space: nowrap;
  -webkit-mask-image: linear-gradient(90deg, #000 88%, transparent);
  mask-image: linear-gradient(90deg, #000 88%, transparent);
}

/* address bar */
.toolbar {
  height: 34px;
  flex: none;
  display: flex;
  align-items: center;
  padding-left: 18px;
  fill: #5f6368;
}

.avatar {
  width: 21px;
  height: 21px;
  margin: 0 12px 0 18px;
  border-radius: 50%;
  background-color: #f4511e;
  color: #fff;
  text-align: center;
  line-height: 16px;
}

.t-ext {
  margin: 0 1px 0 16px;
}

.omnibox {
  width: 1047px;
  height: 26px;
  margin-left: 11px;
  padding: 0 13px 0 10px;
  display: flex;
  align-items: center;
  border-radius: 13px;
  background-color: #eff2f2;
}

.o-share {
  margin-left: 15px;
}

.url {
  margin: 0 12px 0 auto;
  font-size: 12px;
  color: #222;
}

.t-reload {
  margin-left: 14px;
}

.t-back {
  margin-left: 17px;
}

.t-fwd {
  margin-left: 16px;
}

/* bookmarks */
.bookmarks {
  height: 30px;
  flex: none;
  display: flex;
  padding-bottom: 6px;
}

.bm {
  flex: none;
  display: flex;
  align-items: center;
  justify-content: flex-end;
  gap: 8px;
  white-space: nowrap;
  font-size: 10.700px;
}

.ar {
  font-size: 12px;
}

.bm[dir="rtl"] {
  justify-content: flex-start;
  font-size: 11.500px;
}

.bm svg {
  width: 16px;
  height: 16px;
  margin-top: 2px;
}

.bm-launch { width: 213px; }
.bm-first { width: 55px; gap: 10px; }
.bm-python { width: 108px; }
.bm-prep { width: 69px; }
.bm-school { width: 75px; }
.bm-cs { width: 104px; gap: 10px; }
.bm-tele { width: 84px; }
.bm-docs { width: 139px; }
.bm-zoom { width: 70px; }
.bm-priv { width: 63px; }
.bm-mad { width: 69px; }
.bm-web { width: 65px; }
.bm-mail { width: 69px; }
.bm-apps { width: 83px; font-size: 12.500px; }

/* VEXcode header */
.appbar {
  height: 48px;
  flex: none;
  display: flex;
  background-color: #2e90f7;
  border-bottom: 1px solid #4a86bd;
  font-family: "Open Sans", "DejaVu Sans Condensed", "DejaVu Sans", sans-serif;
  font-size: 10px;
  font-weight: bold;
  color: #fff;
  white-space: nowrap;
}

.logo {
  width: 52px;
  background-color: #b1892f;
}

.logo-text {
  font: italic bold 24px "Liberation Sans", sans-serif;
  fill: #fff;
  stroke: #fff;
  stroke-width: .6px;
}

.ab {
  flex: none;
  display: flex;
  flex-direction: column;
  align-items: center;
  padding-top: 8px;
}

.ab span {
  height: 14px;
  line-height: 14px;
  margin-top: 3px;
}

.lang {
  width: 45px;
  flex-direction: row;
  gap: 5px;
  padding: 0 0 0 7px;
}

.file {
  width: 44px;
  justify-content: center;
  padding-top: 0;
  font-size: 12px;
  font-weight: normal;
}

.lang,
.file,
.playground,
.stop {
  background: repeating-linear-gradient(#2677cd 0 2px, transparent 2px 4px) right 8px / 1px 32px no-repeat;
}

.lessons { width: 80px; }
.learn { width: 40px; }

.undo {
  width: 60px;
  margin-left: 239px;
}

.redo {
  width: 48px;
  opacity: .5;
}

.project {
  width: 159px;
  height: 38px;
  margin: 4px 67px 0 2px;
  padding: 0 7px 0;
  display: flex;
  align-items: center;
  gap: 7px;
  border-radius: 3px;
  background-color: #2284eb;
  font-size: 11px;
  font-weight: normal;
}

.project span {
  padding-bottom: 2px;
}

.pick { width: 60px; }

.playground {
  width: 105px;
  padding-right: 3px;
  font-size: 9.500px;
}

.start { width: 32px; }
.step { width: 49px; }
.stop { width: 37px; padding-right: 9px; }
.stop svg, .stop span { opacity: .5; }
.share { width: 53px; }
.feedback { width: 98px; }

/* second bar */
.subbar {
  height: 51px;
  flex: none;
  display: flex;
  justify-content: space-between;
  background-color: #82bff0;
}

.codetab {
  width: 95px;
  height: 42px;
  margin-top: 9px;
  padding-left: 8px;
  display: flex;
  align-items: center;
  gap: 5px;
  border-radius: 0 5px 0 0;
  background-color: #fff;
  font-size: 12.500px;
  color: #6aaede;
}

.codetab span {
  padding-bottom: 3px;
}

.tools {
  display: flex;
  gap: 17px;
  padding: 10px 43px 0 0;
}

.tool {
  width: 30px;
  height: 30px;
  display: flex;
  align-items: center;
  justify-content: center;
  border-radius: 3px;
  background-color: #fff;
}

.qmark {
  font: bold 15px "Open Sans", sans-serif;
  fill: #fff;
  text-anchor: middle;
}

/* workspace */
.work {
  position: relative;
  height: 487px;
  flex: none;
  display: flex;
  background-color: #f9f9f9;
  border-bottom: 1px solid #ccc;
}

.canvas {
  width: 920px;
  border-left: 1px solid #ddd;
  background: radial-gradient(circle, #d3d3d3 .8px, transparent 1.300px) 2.200px 1px / 13.500px 13.500px;
}

.script {
  position: absolute;
  left: 498px;
  top: 63px;
}

.script text,
.block text {
  font-family: "DejaVu Sans", sans-serif;
  font-size: 10px;
  fill: #fff;
  text-anchor: end;
}

.script .val,
.block .val {
  font-family: "Liberation Sans", sans-serif;
  font-size: 12px;
  fill: #575e75;
  text-anchor: middle;
}

.script .unit,
.block .unit {
  font-family: "Liberation Sans", sans-serif;
  font-size: 11.500px;
  font-weight: bold;
}

.num,
.tri {
  fill: #fff;
}

.drop {
  fill: none;
  stroke: #8e5ef0;
}

.drop.blue {
  stroke: #0565f0;
}

.zooms {
  position: absolute;
  left: 22px;
  top: 350px;
  display: flex;
  flex-direction: column;
  gap: 8.300px;
}

.zbtn {
  width: 33px;
  height: 33px;
  display: flex;
  align-items: center;
  justify-content: center;
  border: 1px solid #ccc;
  border-radius: 50%;
  background-color: #fff;
}

.zbtn svg {
  fill: none;
  stroke: #6d7684;
  stroke-width: 1.300;
}

.scroll-v,
.scroll-h,
.scroll-f {
  position: absolute;
  border-radius: 3px;
  background-color: #cecece;
}

.scroll-v {
  left: 3px;
  top: 150px;
  width: 5px;
  height: 283px;
}

.scroll-h {
  left: 103px;
  top: 479px;
  width: 480px;
  height: 5px;
}

.scroll-f {
  left: 917px;
  top: 71px;
  width: 6px;
  height: 52px;
}

/* block palette */
.flyout {
  width: 304px;
  padding-right: 8px;
  display: flex;
  flex-direction: column;
  align-items: flex-end;
}

.flyout h2 {
  height: 19px;
  margin: 5px 0 12px;
  font: bold 10.500px/19px "DejaVu Sans Condensed", "DejaVu Sans", sans-serif;
  color: #575e75;
}

.block {
  margin-bottom: 7px;
}

.block path {
  fill: #9966ff;
  stroke: #8b5fe6;
}

.block .tri {
  fill: #fff;
  stroke: none;
}

#chev path {
  fill: #fff;
  stroke: none;
}

.flyout .events {
  margin: 3px 0 12px;
  font-size: 9.500px;
}

.flyout .hat {
  margin-bottom: 20px;
}

.hat path {
  fill: #ffbf00;
  stroke: #e0aa0c;
}

.flyout .cut {
  margin: 0;
}

.dragged {
  position: absolute;
  left: 883px;
  top: 285px;
  margin: 0;
  overflow: visible;
  filter: drop-shadow(0 0 3px rgba(0, 0, 0, .35));
}

.cursor {
  position: absolute;
  left: 926px;
  top: 308px;
}

/* categories */
.cats {
  width: 56px;
  display: flex;
  flex-direction: column;
  background-color: #fff;
  font-family: "DejaVu Sans Condensed", "DejaVu Sans", sans-serif;
  font-size: 9px;
  line-height: 11px;
  text-align: center;
  color: #575e75;
}

.cat {
  height: 41.300px;
  flex: none;
  padding-top: 5.500px;
  display: flex;
  flex-direction: column;
  align-items: center;
}

.cat i {
  width: 17px;
  height: 17px;
  flex: none;
  border: 1px solid rgba(0, 0, 0, .15);
  border-radius: 50%;
}

.cat span {
  margin-top: 1px;
}

.motion i { background-color: #0a6bff; }
.magnet i { background-color: #3473c6; }
.looks i { background-color: #9966ff; }
.event i { background-color: #ffd500; }
.control i { background-color: #ffab19; }
.sensing i { background-color: #4cbfe6; }
.ops i { background-color: #40bf4a; }
.vars i { background-color: #ff8c1a; }
.myblocks i { background-color: #ff6680; }
.notes i { background-color: #c4c4c4; }

.looks {
  background-color: #e9eef2;
  color: #5580b0;
}

.cats .myblocks {
  height: 52.500px;
}

.cat-toggle {
  flex: 1;
  margin-top: 16px;
  display: flex;
  align-items: center;
  justify-content: center;
  background-color: #e6eef1;
}

/* screen sharing notice */
.sharing {
  position: absolute;
  left: 484px;
  top: 439px;
  width: 313px;
  height: 41px;
  padding: 0 9px 1px;
  display: flex;
  align-items: center;
  border: 1px solid #ccc;
  background-color: #fff;
  box-shadow: 0 1px 2px rgba(0, 0, 0, .25);
  white-space: nowrap;
}

.hide {
  width: 33px;
  color: #2a66b8;
}

.stop-share {
  width: 100px;
  height: 30px;
  padding: 0;
  border: none;
  border-radius: 3px;
  background-color: #1a73e8;
  color: #fff;
  font: bold 10px "DejaVu Sans Condensed", "DejaVu Sans", sans-serif;
}

.share-msg {
  width: 147px;
  margin-left: 9px;
  color: #333;
}

.grip {
  width: 5px;
  height: 11px;
  border: 1px solid #bbb;
  border-width: 0 1px;
}

/* taskbar */
.taskbar {
  height: 38px;
  flex: none;
  display: flex;
  background-color: #1c1c1c;
  color: #fff;
}

.tk {
  flex: none;
  display: flex;
  align-items: center;
  justify-content: center;
}

.note {
  width: 49px;
  padding-left: 9px;
  border-left: 4px solid #1c1c1c;
}

.clock {
  width: 48px;
  display: flex;
  flex-direction: column;
  align-items: center;
  justify-content: center;
  line-height: 16px;
  font-size: 10.500px;
  white-space: nowrap;
}

.kb { width: 33px; }
.tray { width: 22.500px; }

.weather {
  width: 116px;
  padding-right: 26px;
  gap: 8px;
  font-size: 12px;
}

.app {
  width: 46px;
}

.open {
  background: linear-gradient(#76b9ed, #76b9ed) center bottom / 37px 2px no-repeat;
}

.current {
  background-color: #4a4a4a;
  background-size: 46px 2px;
}

.office {
  font: bold 15px "Liberation Sans", sans-serif;
  text-anchor: middle;
}

.word { fill: #1f56a8; }
.ppt { fill: #d2501e; }

.excel {
  font-size: 11px;
  fill: #fff;
}

.badge {
  font: 9px "DejaVu Sans", sans-serif;
  fill: #fff;
  text-anchor: middle;
}

.tv { width: 49px; }

.search {
  width: 321px;
  padding-right: 11px;
  display: flex;
  align-items: center;
  justify-content: flex-end;
  gap: 11px;
  background-color: #f2f2f2;
  border-bottom: 1px solid #bbb;
  color: #333;
  font-size: 15px;
}

.win10 { width: 45px; }
```
